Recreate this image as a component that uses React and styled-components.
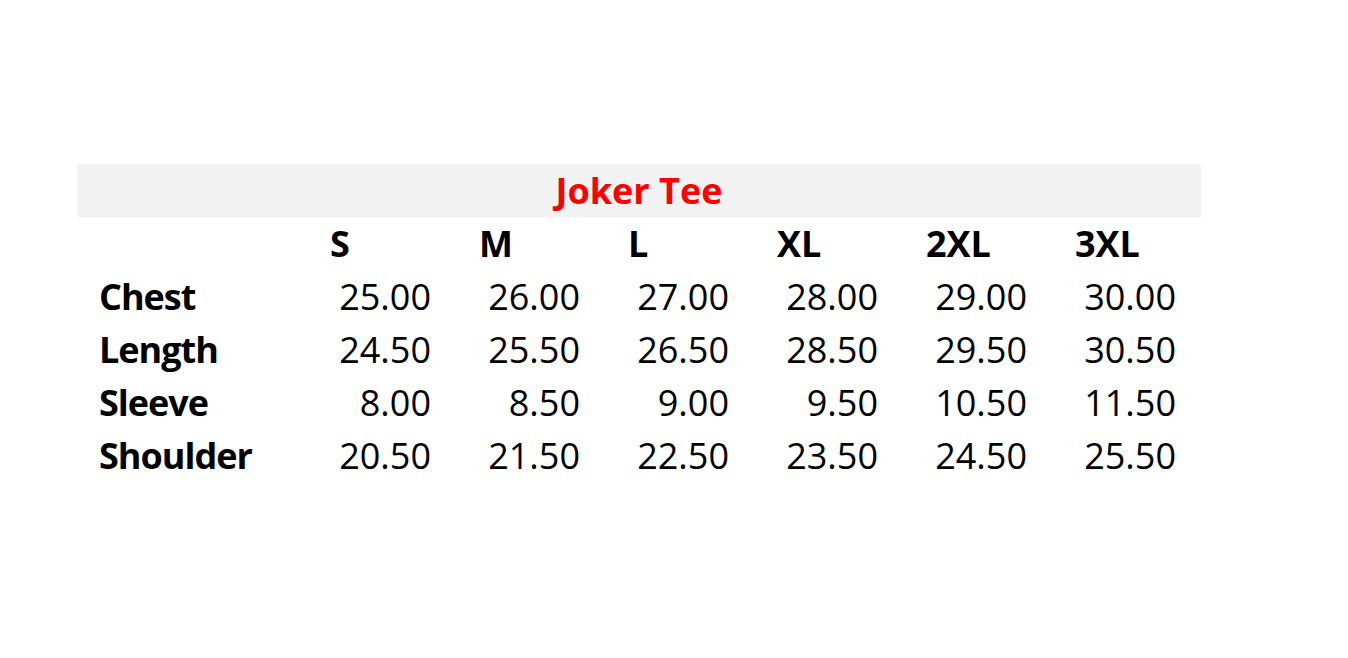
import React from 'react';
import styled, { createGlobalStyle } from 'styled-components';

const GlobalStyle = createGlobalStyle`
  html, body {
    margin: 0;
    padding: 0;
    background: #ffffff;
  }
  body {
    font-family: "Open Sans", "Liberation Sans", sans-serif;
    color: #000000;
  }
`;

const Page = styled.div`
  width: 1348px;
  height: 658px;
  padding: 164px 0 0 77px;
  box-sizing: border-box;
`;

const Sheet = styled.div`
  width: 1124px;
  display: flex;
  flex-direction: column;
`;

const TitleBand = styled.div`
  height: 53px;
  background: #f2f2f2;
  display: flex;
  align-items: center;
  justify-content: center;
  color: #ff0000;
  font-weight: 700;
  font-size: 36px;
  line-height: 1;
`;

const Row = styled.div`
  height: 53px;
  display: grid;
  grid-template-columns: 230px repeat(6, 149px);
  align-items: center;
  font-size: 36px;
  line-height: 1;
`;

const Label = styled.div`
  padding-left: 22px;
  font-weight: 700;
  letter-spacing: -1px;
`;

const Cell = styled.div`
  font-weight: ${p => (p.head ? 700 : 400)};
  text-align: ${p => (p.head ? 'left' : 'right')};
  padding: ${p => (p.head ? '0 0 0 23px' : '0 25px 0 0')};
`;

const sizes = ['S', 'M', 'L', 'XL', '2XL', '3XL'];

const measurements = [
  { name: 'Chest', values: [25, 26, 27, 28, 29, 30] },
  { name: 'Length', values: [24.5, 25.5, 26.5, 28.5, 29.5, 30.5] },
  { name: 'Sleeve', values: [8, 8.5, 9, 9.5, 10.5, 11.5] },
  { name: 'Shoulder', values: [20.5, 21.5, 22.5, 23.5, 24.5, 25.5] },
];

const App = () => {
  return (
    <Page>
      <GlobalStyle />
      <Sheet>
        <TitleBand>Joker Tee</TitleBand>
        <Row>
          <Label />
          {sizes.map(size => (
            <Cell key={size} head>{size}</Cell>
          ))}
        </Row>
        {measurements.map(row => (
          <Row key={row.name}>
            <Label>{row.name}</Label>
            {row.values.map((v, i) => (
              <Cell key={i}>{v.toFixed(2)}</Cell>
            ))}
          </Row>
        ))}
      </Sheet>
    </Page>
  );
};

export default App;
